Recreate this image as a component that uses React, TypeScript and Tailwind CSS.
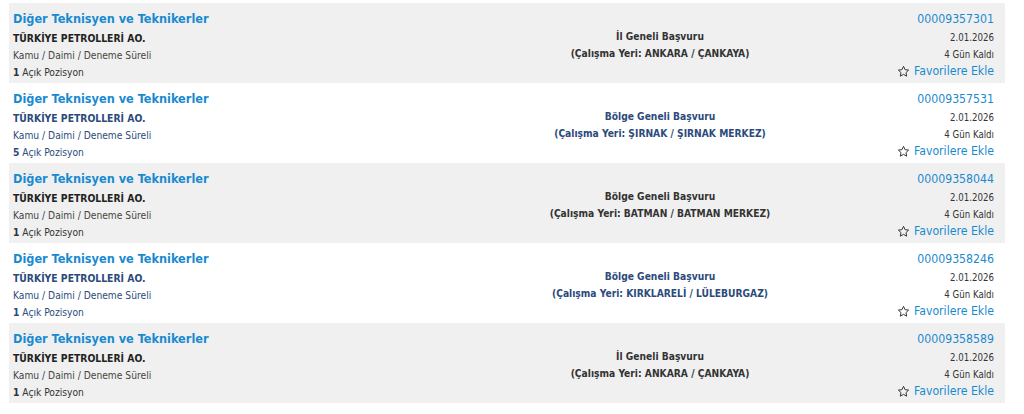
import React from "react";

type Row = {
  count: number;
  scope: string;
  place: string;
  id: string;
};

const rows: Row[] = [
  { count: 1, scope: "İl Geneli Başvuru", place: "(Çalışma Yeri: ANKARA / ÇANKAYA)", id: "00009357301" },
  { count: 5, scope: "Bölge Geneli Başvuru", place: "(Çalışma Yeri: ŞIRNAK / ŞIRNAK MERKEZ)", id: "00009357531" },
  { count: 1, scope: "Bölge Geneli Başvuru", place: "(Çalışma Yeri: BATMAN / BATMAN MERKEZ)", id: "00009358044" },
  { count: 1, scope: "Bölge Geneli Başvuru", place: "(Çalışma Yeri: KIRKLARELİ / LÜLEBURGAZ)", id: "00009358246" },
  { count: 1, scope: "İl Geneli Başvuru", place: "(Çalışma Yeri: ANKARA / ÇANKAYA)", id: "00009358589" },
];

function StarIcon() {
  return (
    <svg width="13" height="13" viewBox="0 0 24 24" fill="none" stroke="#333" strokeWidth="1.8" strokeLinejoin="round">
      <path d="M12 2.5l2.9 6.1 6.6.8-4.9 4.6 1.3 6.6L12 17.3l-5.9 3.3 1.3-6.6-4.9-4.6 6.6-.8z" />
    </svg>
  );
}

export default function App() {
  return (
    <div
      className="w-[1024px] h-[414px] bg-white overflow-hidden pt-[3px]"
      style={{ fontFamily: '"DejaVu Sans Condensed", "DejaVu Sans", Verdana, sans-serif' }}
    >
      <div className="ml-[9px] w-[996px] flex flex-col">
        {rows.map((r, i) => {
          const gray = i % 2 === 0;
          const txt = gray ? "text-[#333333]" : "text-[#2c4a7c]";
          return (
            <div
              key={r.id}
              className={`h-[80px] flex ${gray ? "bg-[#f0f0f0]" : "bg-white"}`}
            >
              <div className="w-[340px] pl-[4px] pt-[7px] flex flex-col">
                <div className="h-[18px] leading-[18px] text-[12.6px] font-bold text-[#1a8ad0]">
                  Diğer Teknisyen ve Teknikerler
                </div>
                <div className={`mt-[1px] h-[18px] leading-[18px] text-[10.3px] font-bold ${gray ? "text-[#222222]" : "text-[#2c4a7c]"}`}>
                  TÜRKİYE PETROLLERİ AO.
                </div>
                <div className={`h-[17px] leading-[17px] text-[10.2px] ${gray ? "text-[#444444]" : "text-[#2c4a7c]"}`}>
                  Kamu / Daimi / Deneme Süreli
                </div>
                <div className={`h-[17px] leading-[17px] text-[10.2px] ${gray ? "text-[#333333]" : "text-[#2c4a7c]"}`}>
                  <span className="font-bold">{r.count}</span> Açık Pozisyon
                </div>
              </div>
              <div className={`flex-1 flex flex-col justify-center items-center pl-[166px] pt-[4px] text-[10.2px] font-bold ${txt}`}>
                <div className="leading-[17px]">{r.scope}</div>
                <div className="leading-[17px]">{r.place}</div>
              </div>
              <div className="w-[200px] pr-[11px] pt-[7px] flex flex-col items-end">
                <div className="h-[18px] leading-[18px] text-[12.2px] text-[#1a8ad0]">{r.id}</div>
                <div className="mt-[1px] h-[18px] leading-[18px] text-[9.6px] text-[#333333]">2.01.2026</div>
                <div className="h-[15px] leading-[15px] text-[9.6px] text-[#333333]">4 Gün Kaldı</div>
                <div className="h-[18px] flex items-center gap-[4px] text-[12.2px] text-[#1a8ad0]">
                  <StarIcon />
                  <span className="leading-[18px]">Favorilere Ekle</span>
                </div>
              </div>
            </div>
          );
        })}
      </div>
    </div>
  );
}
